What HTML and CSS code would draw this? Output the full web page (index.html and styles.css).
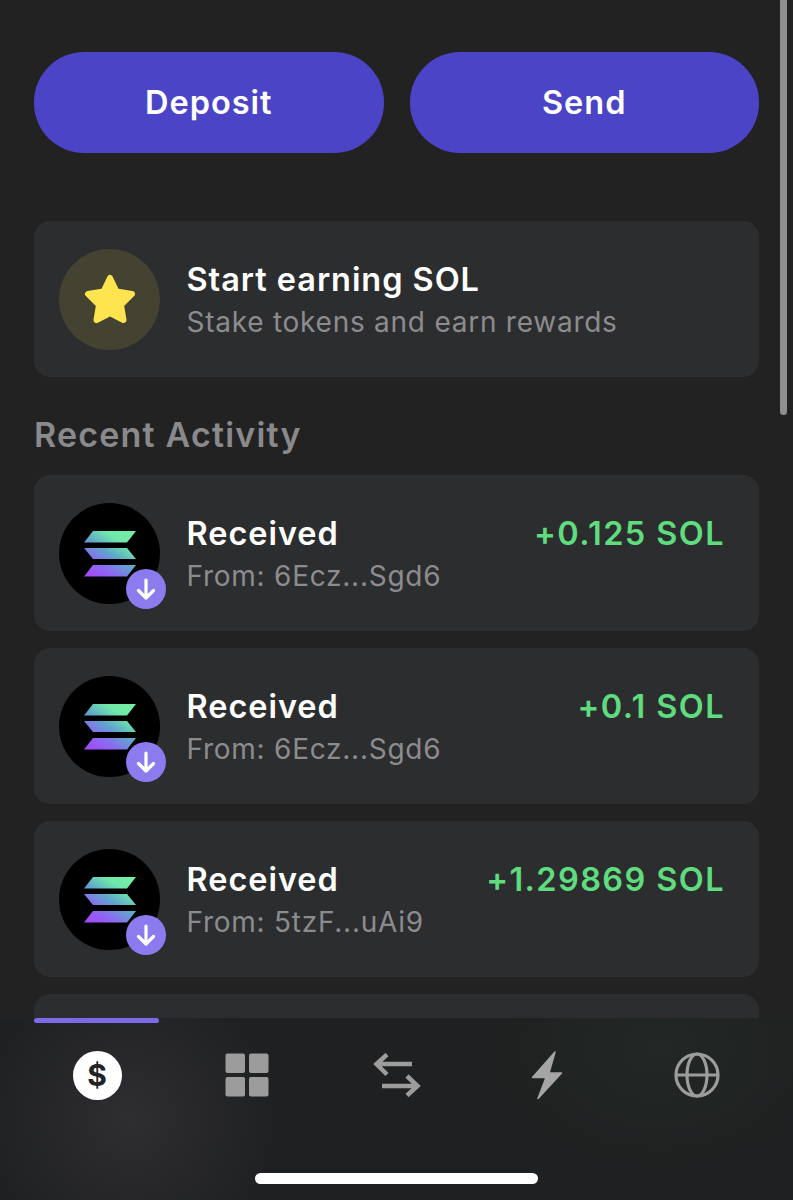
FILE: index.html
```html
<!DOCTYPE html>
<html lang="en">
<head>
    <meta charset="UTF-8">
    <meta name="viewport" content="width=device-width, initial-scale=1.0">
    <title>Wallet</title>
    <link rel="stylesheet" href="styles.css">
</head>
<body>
    <svg class="defs" width="0" height="0" aria-hidden="true">
        <defs>
            <linearGradient id="sol-grad" gradientUnits="userSpaceOnUse" x1="32" y1="76" x2="64" y2="28">
                <stop offset="0" stop-color="#a546fd"/>
                <stop offset="0.3" stop-color="#8a6cf0"/>
                <stop offset="0.55" stop-color="#5fa6cc"/>
                <stop offset="0.82" stop-color="#6fe8aa"/>
                <stop offset="1" stop-color="#74eea4"/>
            </linearGradient>
            <symbol id="sol-logo" viewBox="0 0 101 101">
                <circle cx="50.5" cy="50.5" r="50.5" fill="#000"/>
                <path d="M34 28H77L68 39.500H25Z" fill="url(#sol-grad)"/>
                <path d="M25 45H68L77 56H34Z" fill="url(#sol-grad)"/>
                <path d="M34 62H77L68 73.500H25Z" fill="url(#sol-grad)"/>
            </symbol>
        </defs>
    </svg>

    <div class="screen">
        <main class="content">
            <div class="actions">
                <button class="action">Deposit</button>
                <button class="action">Send</button>
            </div>

            <div class="card promo">
                <div class="icon star-icon">
                    <svg width="52" height="50" viewBox="0 0 52 50">
                        <path d="M26 4L32.500 17.500L48 20L37 31L39.500 46L26 39L12.500 46L15 31L4 20L19.500 17.500Z" fill="#fee44f" stroke="#fee44f" stroke-width="6" stroke-linejoin="round"/>
                    </svg>
                </div>
                <div class="text">
                    <div class="title">Start earning SOL</div>
                    <div class="sub">Stake tokens and earn rewards</div>
                </div>
            </div>

            <h2 class="heading">Recent Activity</h2>

            <div class="list">
                <div class="card">
                    <div class="icon">
                        <svg width="101" height="101"><use href="#sol-logo"/></svg>
                        <span class="badge">
                            <svg width="20" height="22" viewBox="0 0 20 22"><path d="M10 2V20M2.500 12.500L10 20L17.500 12.500" fill="none" stroke="#fff" stroke-width="3.200" stroke-linecap="round" stroke-linejoin="round"/></svg>
                        </span>
                    </div>
                    <div class="text">
                        <div class="title">Received</div>
                        <div class="sub">From: 6Ecz...Sgd6</div>
                    </div>
                    <div class="amount">+0.125 SOL</div>
                </div>
                <div class="card">
                    <div class="icon">
                        <svg width="101" height="101"><use href="#sol-logo"/></svg>
                        <span class="badge">
                            <svg width="20" height="22" viewBox="0 0 20 22"><path d="M10 2V20M2.500 12.500L10 20L17.500 12.500" fill="none" stroke="#fff" stroke-width="3.200" stroke-linecap="round" stroke-linejoin="round"/></svg>
                        </span>
                    </div>
                    <div class="text">
                        <div class="title">Received</div>
                        <div class="sub">From: 6Ecz...Sgd6</div>
                    </div>
                    <div class="amount">+0.1 SOL</div>
                </div>
                <div class="card">
                    <div class="icon">
                        <svg width="101" height="101"><use href="#sol-logo"/></svg>
                        <span class="badge">
                            <svg width="20" height="22" viewBox="0 0 20 22"><path d="M10 2V20M2.500 12.500L10 20L17.500 12.500" fill="none" stroke="#fff" stroke-width="3.200" stroke-linecap="round" stroke-linejoin="round"/></svg>
                        </span>
                    </div>
                    <div class="text">
                        <div class="title">Received</div>
                        <div class="sub">From: 5tzF...uAi9</div>
                    </div>
                    <div class="amount">+1.29869 SOL</div>
                </div>
                <div class="card"></div>
            </div>
        </main>

        <nav class="tabbar">
            <div class="tab-line"></div>
            <div class="tabs">
                <div class="tab"><span class="dollar">$</span></div>
                <div class="tab">
                    <svg width="44" height="44" viewBox="0 0 44 44" fill="#9c9c9c">
                        <rect x="0.500" y="0.500" width="19.500" height="19.500" rx="2"/>
                        <rect x="24" y="0.500" width="19.500" height="19.500" rx="2"/>
                        <rect x="0.500" y="24" width="19.500" height="19.500" rx="2"/>
                        <rect x="24" y="24" width="19.500" height="19.500" rx="2"/>
                    </svg>
                </div>
                <div class="tab">
                    <svg width="48" height="44" viewBox="0 0 48 44" fill="none" stroke="#9c9c9c" stroke-width="4.500" stroke-linejoin="miter">
                        <path d="M39 11H4M14 1.500L3.500 11L14 21.500"/>
                        <path d="M9 33H44M34 23L44.500 33L34 42.500"/>
                    </svg>
                </div>
                <div class="tab">
                    <svg width="32" height="50" viewBox="0 0 32 50" fill="#a5a5a5" stroke="#a5a5a5" stroke-width="1.500" stroke-linejoin="round">
                        <path d="M24 2L1.500 27.500H15L7 48.500L30.500 23H18Z"/>
                    </svg>
                </div>
                <div class="tab">
                    <svg width="46" height="46" viewBox="0 0 46 46" fill="none" stroke="#9c9c9c" stroke-width="3.200">
                        <circle cx="23" cy="23" r="21"/>
                        <ellipse cx="23" cy="23" rx="10" ry="21"/>
                        <path d="M2 23H44"/>
                    </svg>
                </div>
            </div>
            <div class="home-bar"></div>
        </nav>

        <div class="scrollbar"></div>
    </div>
</body>
</html>
```

FILE: styles.css
```css
* {
    box-sizing: border-box;
}
body {
    margin: 0;
    background: #222223;
    font-family: Inter, "Liberation Sans", sans-serif;
    color: #fff;
}
.defs {
    display: block;
    height: 0;
}
.screen {
    position: relative;
    display: flex;
    flex-direction: column;
    height: 1200px;
    overflow: hidden;
}
.content {
    flex: 1;
    min-height: 0;
    overflow: hidden;
    padding: 52px 34px 0;
}
.actions {
    display: flex;
    gap: 26px;
    margin-bottom: 68px;
}
.action {
    flex: 1;
    height: 101px;
    border: none;
    border-radius: 50px;
    background: #4b44c6;
    color: #fff;
    font-family: inherit;
    font-size: 32.500px;
    font-weight: 600;
    letter-spacing: 1px;
}
.card {
    display: flex;
    align-items: center;
    height: 156px;
    padding: 0 34px 0 25px;
    border-radius: 16px;
    background: #2c2d2f;
}
.icon {
    position: relative;
    flex: none;
    width: 101px;
    height: 101px;
    margin-right: 26.500px;
}
.icon > svg {
    display: block;
}
.star-icon {
    display: flex;
    align-items: center;
    justify-content: center;
    border-radius: 50%;
    background: #444231;
}
.badge {
    position: absolute;
    right: -6px;
    bottom: -5px;
    display: flex;
    align-items: center;
    justify-content: center;
    width: 40px;
    height: 40px;
    border-radius: 50%;
    background: #8b7bef;
}
.text {
    flex: 1;
    margin-top: 4px;
}
.title {
    font-size: 32.500px;
    font-weight: 600;
    letter-spacing: 0.950px;
    line-height: 43px;
}
.sub {
    font-size: 28px;
    letter-spacing: 0.750px;
    line-height: 43px;
    color: #8c8c8e;
}
.amount {
    margin-top: 4px;
    margin-bottom: 43px;
    font-size: 32.500px;
    font-weight: 600;
    letter-spacing: 1.400px;
    line-height: 43px;
    color: #5fdc7e;
}
.heading {
    margin: 0;
    padding: 37px 0 19px 0;
    font-size: 34px;
    font-weight: 600;
    letter-spacing: 1.200px;
    line-height: 42px;
    color: #8a8a8c;
}
.list {
    display: flex;
    flex-direction: column;
    gap: 17px;
}
.tabbar {
    flex: none;
    height: 182px;
    display: flex;
    flex-direction: column;
    background:
        radial-gradient(circle at 130px 100px, #2e2e32 0, rgba(46, 46, 50, 0) 150px),
        radial-gradient(ellipse 180px 130px at 660px 30px, #212825 0, rgba(33, 40, 37, 0) 100%),
        #1f2021;
}
.tab-line {
    width: 125px;
    height: 5px;
    margin-left: 34px;
    border-radius: 3px;
    background: #7b6be8;
}
.tabs {
    display: grid;
    grid-template-columns: repeat(5, 150px);
    padding: 0 22px;
    height: 104px;
}
.tab {
    display: flex;
    align-items: center;
    justify-content: center;
}
.dollar {
    display: flex;
    align-items: center;
    justify-content: center;
    width: 49px;
    height: 49px;
    border-radius: 50%;
    background: #fff;
    color: #232325;
    font-size: 30px;
    font-weight: 700;
}
.home-bar {
    width: 283px;
    height: 11px;
    margin: 46px auto 0;
    border-radius: 6px;
    background: #fff;
}
.scrollbar {
    position: absolute;
    top: -5px;
    left: 780px;
    width: 7px;
    height: 420px;
    border-radius: 4px;
    background: #8f8f8f;
}
```
